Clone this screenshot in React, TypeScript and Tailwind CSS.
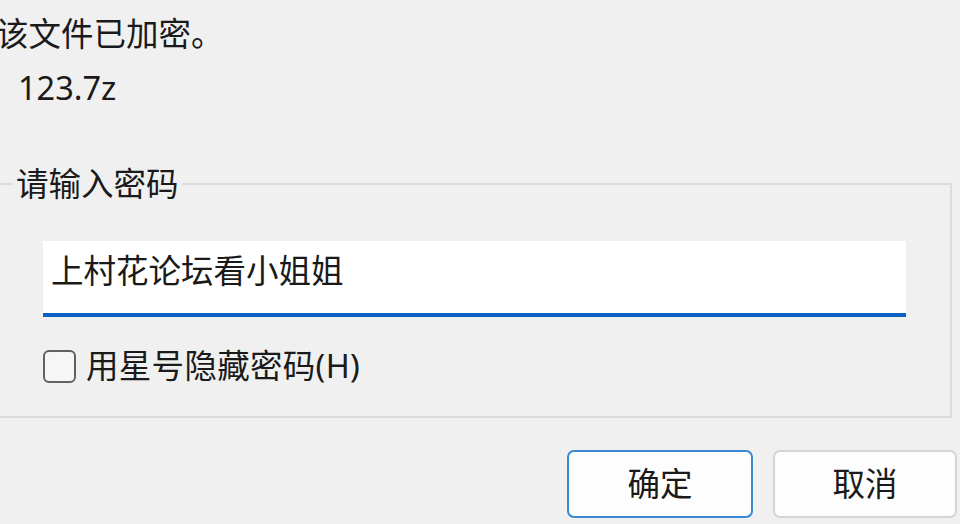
import { useState } from "react";

export default function App() {
  const [password, setPassword] = useState("上村花论坛看小姐姐");
  const [masked, setMasked] = useState(false);

  return (
    <div className="h-[524px] w-[960px] overflow-hidden bg-[#f0f0f0] font-['Noto_Sans','Noto_Sans_CJK_SC',sans-serif] text-[32.5px] leading-[40px] text-[#1a1a1a]">
      <div className="ml-[-4px] pt-[14px]">该文件已加密。</div>
      <div className="ml-[18px] mt-[14px]">123.7z</div>

      <fieldset className="ml-[-10px] mt-[56px] w-[962px] border-2 border-[#dcdcdc] pb-[30px] pl-[21px]">
        <legend className="px-[3px]">请输入密码</legend>
        <div className="ml-[30px] flex flex-col">
          <input
            type={masked ? "password" : "text"}
            value={password}
            onChange={(e) => setPassword(e.target.value)}
            className="mt-[37px] h-[76px] w-[863px] border-b-4 border-[#0b63c1] bg-white pb-[16px] pl-[8px] text-[32.5px] text-[#1a1a1a] outline-none"
          />
          <label className="mt-[29px] flex items-center gap-[10px]">
            <span
              onClick={() => setMasked(!masked)}
              className="flex h-[33px] w-[33px] items-center justify-center rounded-[6px] border-2 border-[#616161] bg-[#f6f6f6]"
            >
              {masked && (
                <svg viewBox="0 0 16 16" className="h-[20px] w-[20px]">
                  <path d="M3 8.5l3.2 3L13 4.5" fill="none" stroke="#1a1a1a" strokeWidth="1.6" />
                </svg>
              )}
            </span>
            <span className="tracking-[0.3px]">用星号隐藏密码(H)</span>
          </label>
        </div>
      </fieldset>

      <div className="mt-[32px] flex justify-end gap-[20px] pr-[3px]">
        <button
          type="button"
          className="h-[68px] w-[186px] rounded-[7px] border-2 border-[#3b87d4] bg-[#fdfdfd] text-[32.5px]"
        >
          确定
        </button>
        <button
          type="button"
          className="h-[68px] w-[184px] rounded-[7px] border-2 border-[#d4d4d4] bg-[#fdfdfd] text-[32.5px]"
        >
          取消
        </button>
      </div>
    </div>
  );
}
